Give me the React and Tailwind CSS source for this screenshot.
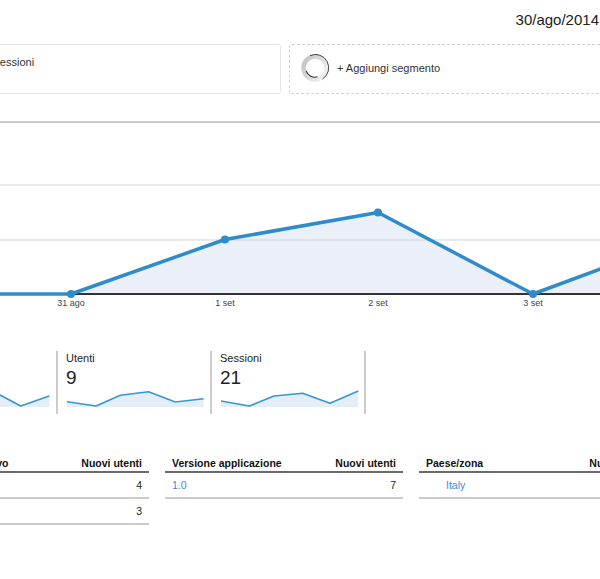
import React from "react";

function Spark({ pts }) {
  const line = pts.map((p) => p.join(",")).join(" ");
  const last = pts[pts.length - 1][0];
  const area = `0,18 ${line} ${last},18`;
  return (
    <svg width="138" height="18" viewBox="0 0 138 18" className="block ml-[1px]">
      <polygon points={area} fill="#e3eef8" />
      <polyline points={line} fill="none" stroke="#3796d3" strokeWidth="1.6" strokeLinejoin="round" />
    </svg>
  );
}

function Card({ label, value, pts }) {
  return (
    <div className="w-[154px] shrink-0 border-r-2 border-[#cccccc] pl-[8px] pb-[7px]">
      <div className="h-[14px] text-[11px] leading-[14px] text-[#222]">{label}</div>
      <div className="mt-[2px] h-[22px] text-[19px] leading-[22px] text-[#222]">{value}</div>
      <Spark pts={pts} />
    </div>
  );
}

function Table({ left, right, rows }) {
  return (
    <div className="w-[238px] shrink-0">
      <div className="flex justify-between px-[7px] pb-[1px] border-b-2 border-[#6a6a6a] font-bold text-[10.5px] leading-[14px] text-[#111]">
        <span>{left}</span>
        <span>{right}</span>
      </div>
      {rows.map((r, i) => (
        <div
          key={i}
          className="flex h-[26px] items-center justify-between border-b-2 border-[#cccccc] px-[7px] pt-[1px] text-[10.5px] text-[#222]"
        >
          <span className={r.link ? "text-[#3b8dd1] " + (r.indent ? "pl-[20px]" : "") : ""}>{r.a}</span>
          <span>{r.b}</span>
        </div>
      ))}
    </div>
  );
}

export default function App() {
  const linePts = "0,294 71,294 225,239.5 378,212.5 533,294 687,237";
  return (
    <div className="w-[600px] h-[579px] overflow-hidden bg-white text-[#222] font-['Liberation_Sans',Arial,sans-serif]">
      <div className="flex justify-end pt-[11px] pr-[1px] text-[15px] leading-[17px] text-[#222]">
        30/ago/2014
      </div>

      <div className="mt-[16px] -ml-[92px] flex gap-[8px]">
        <div className="h-[50px] w-[373px] shrink-0 rounded-[3px] border border-[#e4e4e4] pl-[46px] pt-[10px] text-[11px] leading-[14px] text-[#333]">
          Tutte le sessioni
        </div>
        <div className="flex h-[50px] w-[373px] shrink-0 items-center gap-[8px] rounded-[3px] border border-dashed border-[#d2d2d2] pl-[11px] pb-[2px] text-[11px] leading-[14px] text-[#333]">
          <svg width="28" height="28" viewBox="0 0 28 28" className="shrink-0">
            <defs>
              <linearGradient id="ring" x1="0" y1="0.2" x2="1" y2="0.8">
                <stop offset="0" stopColor="#c4c4c4" />
                <stop offset="0.5" stopColor="#dddddd" />
                <stop offset="1" stopColor="#f2f2f2" />
              </linearGradient>
            </defs>
            <circle cx="14" cy="14" r="11.5" fill="none" stroke="url(#ring)" strokeWidth="4.5" />
            <path d="M 5.2 17 A 9.2 9.2 0 0 0 16.5 22.8" fill="none" stroke="#2a2a2a" strokeWidth="1.1" />
            <path d="M 9 1.6 A 13.3 13.3 0 0 1 21.5 25" fill="none" stroke="#444" strokeWidth="1" />
          </svg>
          <span>+ Aggiungi segmento</span>
        </div>
      </div>

      <div className="mt-[27px] h-[2px] bg-[#cbcbcb]" />

      <svg width="600" height="192" viewBox="0 123 600 192" className="block">
        <rect x="0" y="184" width="600" height="2" fill="#ebebeb" />
        <rect x="0" y="239" width="600" height="2" fill="#ebebeb" />
        <polygon points={`${linePts} 687,294`} fill="rgba(196,212,236,0.36)" />
        <rect x="0" y="293" width="600" height="2" fill="#333333" />
        <polyline
          points={linePts}
          fill="none"
          stroke="#2e8cca"
          strokeWidth="3.5"
          strokeLinejoin="round"
        />
        {[
          [71, 294],
          [225, 239.5],
          [378, 212.5],
          [533, 294],
        ].map(([x, y], i) => (
          <circle key={i} cx={x} cy={y} r="4" fill="#2e8cca" />
        ))}
        <g fontFamily="'Liberation Sans', Arial, sans-serif" fontSize="9" fill="#444" textAnchor="middle">
          <text x="71" y="306">31 ago</text>
          <text x="225" y="306">1 set</text>
          <text x="378" y="306">2 set</text>
          <text x="533" y="306">3 set</text>
        </g>
      </svg>

      <div className="mt-[36px] -ml-[96px] flex">
        <Card
          label=""
          value=""
          pts={[
            [0, 9],
            [29, 13],
            [58, 3],
            [87, 6],
            [107.7, 17],
            [136.3, 7],
          ]}
        />
        <Card
          label="Utenti"
          value="9"
          pts={[
            [0, 12.7],
            [29, 17],
            [53.3, 6.3],
            [81.6, 2.7],
            [108.3, 13],
            [136.6, 9.7],
          ]}
        />
        <Card
          label="Sessioni"
          value="21"
          pts={[
            [0, 12],
            [28.3, 17],
            [53, 7],
            [81.7, 4.3],
            [109, 14.3],
            [137.3, 2],
          ]}
        />
      </div>

      <div className="mt-[42px] -ml-[89px] flex gap-[16px]">
        <Table
          left="Sistema operativo"
          right="Nuovi utenti"
          rows={[
            { a: "", b: "4" },
            { a: "", b: "3" },
          ]}
        />
        <Table left="Versione applicazione" right="Nuovi utenti" rows={[{ a: "1.0", b: "7", link: true }]} />
        <Table
          left="Paese/zona"
          right="Nuovi utenti"
          rows={[{ a: "Italy", b: "7", link: true, indent: true }]}
        />
      </div>
    </div>
  );
}
